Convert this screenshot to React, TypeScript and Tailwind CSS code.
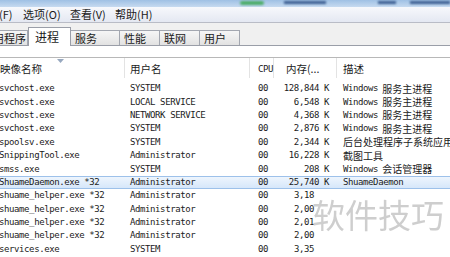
const rows = [
  { name: "svchost.exe", user: "SYSTEM", cpu: "00", mem: "128,844 K", desc: ["Windows", "服务主进程"] },
  { name: "svchost.exe", user: "LOCAL SERVICE", cpu: "00", mem: "6,548 K", desc: ["Windows", "服务主进程"] },
  { name: "svchost.exe", user: "NETWORK SERVICE", cpu: "00", mem: "4,368 K", desc: ["Windows", "服务主进程"] },
  { name: "svchost.exe", user: "SYSTEM", cpu: "00", mem: "2,876 K", desc: ["Windows", "服务主进程"] },
  { name: "spoolsv.exe", user: "SYSTEM", cpu: "00", mem: "2,344 K", desc: ["", "后台处理程序子系统应用"] },
  { name: "SnippingTool.exe", user: "Administrator", cpu: "00", mem: "16,228 K", desc: ["", "截图工具"] },
  { name: "smss.exe", user: "SYSTEM", cpu: "00", mem: "208 K", desc: ["Windows", "会话管理器"] },
  { name: "ShuameDaemon.exe *32", user: "Administrator", cpu: "00", mem: "25,740 K", desc: ["ShuameDaemon", ""], selected: true },
  { name: "shuame_helper.exe *32", user: "Administrator", cpu: "00", mem: "3,18", desc: ["", ""], partial: true },
  { name: "shuame_helper.exe *32", user: "Administrator", cpu: "00", mem: "2,00", desc: ["", ""], partial: true },
  { name: "shuame_helper.exe *32", user: "Administrator", cpu: "00", mem: "2,01", desc: ["", ""], partial: true },
  { name: "shuame_helper.exe *32", user: "Administrator", cpu: "00", mem: "2,00", desc: ["", ""], partial: true },
  { name: "services.exe", user: "SYSTEM", cpu: "00", mem: "3,35", desc: ["", ""], partial: true },
];

const mono = "font-['DejaVu_Sans_Mono','Liberation_Mono',monospace] text-[9px] tracking-[-0.4px]";
const cjk = "font-['Noto_Sans_CJK_SC','Noto_Sans',sans-serif]";

export default function App() {
  return (
    <div className={`relative h-[257px] w-[450px] overflow-hidden bg-white text-[#1b1b1b] ${cjk}`}>
      {/* blurred title strip */}
      <div className="relative h-[7px] overflow-hidden bg-gradient-to-b from-[#9fc0e4] to-[#c6daf0]">
        <div className="absolute left-[240px] top-[1px] h-[4px] w-[24px] rounded bg-[#4fae6a] blur-[1px]" />
        <div className="absolute left-[284px] top-[1px] h-[3px] w-[42px] bg-[#3d5f91] blur-[1px]" />
        <div className="absolute left-[378px] top-[1px] h-[3px] w-[18px] bg-[#3d5f91] blur-[1px]" />
        <div className="absolute left-[410px] top-[1px] h-[3px] w-[40px] bg-[#3d5f91] blur-[1px]" />
      </div>

      {/* menu bar */}
      <div className="flex h-[16px] items-center border-b border-[#b9bcc6] bg-gradient-to-b from-[#f7f8fc] to-[#e4e8f2] text-[11px] leading-none">
        <span className="-ml-[1px] w-[24px]">(F)</span>
        <span className="w-[47px]">选项(O)</span>
        <span className="w-[45px]">查看(V)</span>
        <span>帮助(H)</span>
      </div>

      {/* tabs */}
      <div className="flex h-[23px] items-end border-b border-[#9a9ea8] bg-[#f0f0f0] text-[11px] leading-none">
        <div className="flex h-[15px] w-[28px] items-center justify-end overflow-hidden whitespace-nowrap border-r border-t border-[#a3a7b0] bg-gradient-to-b from-[#f6f6f6] to-[#e2e2e2] pr-[1px]">
          <span className="shrink-0">用程序</span>
        </div>
        <div className="-mb-[1px] flex h-[19px] w-[43px] items-start border-x border-t border-[#9a9ea8] bg-white pl-[6px] pt-[3px] text-[12px]">
          进程
        </div>
        {["服务", "性能", "联网", "用户"].map((t, i) => (
          <div
            key={t}
            className={`flex h-[15px] items-center border-r border-t border-[#a3a7b0] bg-gradient-to-b from-[#f6f6f6] to-[#e2e2e2] pl-[4px] ${
              i === 0 ? "w-[49px]" : "w-[40px]"
            }`}
          >
            {t}
          </div>
        ))}
      </div>

      {/* white gap */}
      <div className="h-[12px] border-b border-[#b8b8b8]" />

      {/* header */}
      <div className="relative grid h-[20px] grid-cols-[125px_125px_24px_63px_1fr] items-center text-[10.5px] leading-none">
        <div className="h-full border-r border-[#e3e3e3] pt-[6px]">映像名称</div>
        <div className="h-full border-r border-[#e3e3e3] pl-[5px] pt-[6px]">用户名</div>
        <div className={`h-full border-r border-[#e3e3e3] pl-[8px] pt-[7px] ${mono}`}>CPU</div>
        <div className="h-full border-r border-[#e3e3e3] pl-[12px] pt-[6px]">内存(...</div>
        <div className="h-full pl-[6px] pt-[6px]">描述</div>
        <svg className="absolute left-[57px] top-[1px]" width="7" height="4" viewBox="0 0 7 4">
          <path d="M0 0 L7 0 L3.5 4 Z" fill="#97a8bf" />
        </svg>
      </div>

      {/* rows */}
      <div className="mt-[4px] flex flex-col">
        {rows.map((r, i) => (
          <div
            key={i}
            className={`grid h-[13.4px] grid-cols-[125px_125px_24px_63px_1fr] items-center leading-none ${
              r.selected ? "border-y border-[#9dc1ea] bg-gradient-to-b from-[#eef5fd] to-[#d6e7fa]" : ""
            }`}
          >
            <div className={`-ml-[1px] whitespace-nowrap ${mono}`}>{r.name}</div>
            <div className={`whitespace-nowrap pl-[5px] ${mono}`}>{r.user}</div>
            <div className={`pl-[8px] ${mono}`}>{r.cpu}</div>
            <div className={`whitespace-nowrap ${mono} ${r.partial ? "pl-[20px] text-left" : "pr-[8px] text-right"}`}>{r.mem}</div>
            <div className="flex min-w-0 items-center gap-[4px] overflow-hidden whitespace-nowrap pl-[6px]">
              {r.desc[0] && <span className={`shrink-0 ${mono}`}>{r.desc[0]}</span>}
              {r.desc[1] && <span className="shrink-0 text-[10px]">{r.desc[1]}</span>}
            </div>
          </div>
        ))}
      </div>

      {/* watermark */}
      <div className="pointer-events-none absolute left-[312px] top-[198px] text-[33px] leading-none text-[#c9c9c9] opacity-90">
        软件技巧
      </div>
    </div>
  );
}
